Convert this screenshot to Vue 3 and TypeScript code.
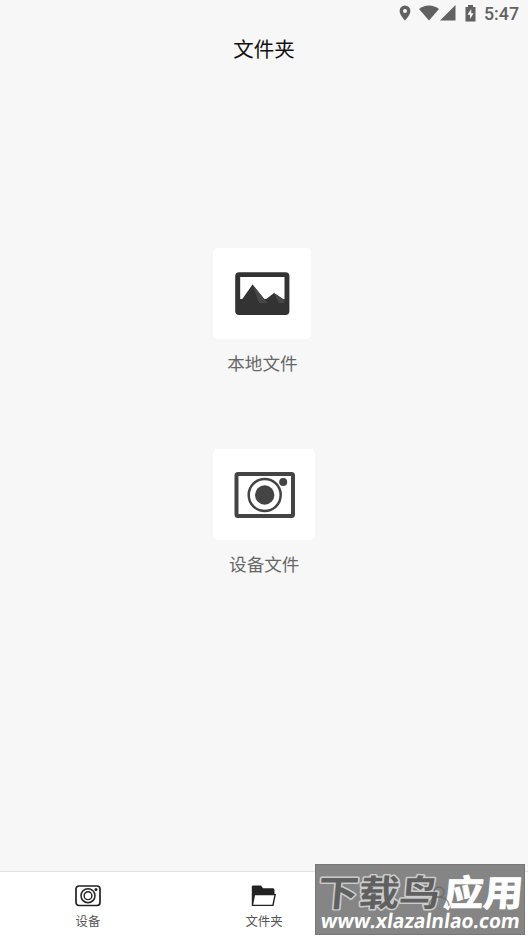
<script setup lang="ts">
interface Tab { key: string; label: string }
const tabs: Tab[] = [
  { key: 'device', label: '设备' },
  { key: 'folder', label: '文件夹' },
  { key: 'mine', label: '' },
]
</script>

<template>
  <div class="screen">
    <div class="status">
      <svg class="pin" viewBox="0 0 12 16"><path fill-rule="evenodd" d="M6 .5A5.4 5.4 0 0 0 .6 5.9C.6 9.9 6 15.5 6 15.5s5.4-5.6 5.4-9.6A5.4 5.4 0 0 0 6 .5zM6 4a2 2 0 1 1 0 4 2 2 0 0 1 0-4z" /></svg>
      <svg class="wifi" viewBox="0 0 20 16"><path d="M0 4C5.500-.7 14.500-.7 20 4L10 15.500z" /></svg>
      <svg class="signal" viewBox="0 0 16 16"><path d="M15.500 0V15.500H0z" /></svg>
      <svg class="battery" viewBox="0 0 11 17"><path fill-rule="evenodd" d="M3 0H8V2H10.500V16.500H.5V2H3zM6.200 4L2.500 9.800H5V14L8.600 8.300H6.200z" /></svg>
      <span class="clock">5:47</span>
    </div>
    <header class="title">文件夹</header>

    <main class="files">
      <section class="entry local">
        <div class="tile">
          <svg width="56" height="44" viewBox="0 0 56 44">
            <rect x="1.200" y=".3" width="54.200" height="42.700" rx="4" fill="#333" />
            <path d="M6.200 5H50.500V27H6.200z" fill="#fff" />
            <path d="M6.200 30L18.500 12.500 31 28 40 21 50.500 28V32H6.200z" fill="#333" />
            <path d="M18.500 12.500L31 28 33.500 31H25zM40 21L50.500 28V31H45z" fill="#484848" />
          </svg>
        </div>
        <div class="name">本地文件</div>
      </section>
      <section class="entry device">
        <div class="tile">
          <svg width="61" height="46" viewBox="0 0 61 46">
            <rect x="2.500" y="2" width="56.500" height="42" rx="1.500" fill="none" stroke="#444" stroke-width="4" />
            <circle cx="30.700" cy="23" r="16" fill="none" stroke="#444" stroke-width="2.500" />
            <circle cx="30.700" cy="23" r="9.700" fill="#444" />
            <circle cx="49.200" cy="10" r="4" fill="#444" />
          </svg>
        </div>
        <div class="name">设备文件</div>
      </section>
    </main>

    <nav class="tabs">
      <div v-for="tab in tabs" :key="tab.key" class="tab">
        <svg v-if="tab.key === 'device'" width="26" height="22" viewBox="0 0 26 22" fill="none" stroke="#222">
          <rect x="1" y="1" width="24" height="19.500" rx="3" stroke-width="1.700" />
          <circle cx="13" cy="10.700" r="7" stroke-width="1.500" />
          <circle cx="13" cy="10.700" r="3.900" stroke-width="1.400" />
          <circle cx="21" cy="4.600" r="1.500" fill="#222" stroke="none" />
        </svg>
        <svg v-else-if="tab.key === 'folder'" width="26" height="22" viewBox="0 0 26 22">
          <path d="M.8 1.500Q.8.500 2 .500H10L12 3.200H22Q23.500 3.200 23.500 5V9H25L22.500 21H.8z" fill="#222" />
          <path d="M4 10.300H23.300L21.300 19.800H2.200z" fill="#fff" />
        </svg>
        <span>{{ tab.label }}</span>
      </div>
    </nav>

    <div class="watermark">
      <svg width="210" height="71" viewBox="0 0 210 71">
        <g class="brand" transform="translate(2 41.500) skewX(-5)">
          <text class="dark" x="0" y="0" textLength="122" lengthAdjust="spacingAndGlyphs">下载鸟</text>
          <text class="light" x="126" y="0" textLength="79" lengthAdjust="spacingAndGlyphs">应用</text>
        </g>
        <g class="person"><circle cx="124" cy="28" r="5" /><path d="M114 42C114 30 134 30 134 42" /></g>
        <g transform="translate(5 64) skewX(-8)">
          <text class="url" x="0" y="0" textLength="199" lengthAdjust="spacingAndGlyphs">www.xlazalnlao.com</text>
        </g>
      </svg>
    </div>
  </div>
</template>

<style>
body { background: #f7f7f7; }
</style>

<style scoped>
.screen { position: relative; display: flex; flex-direction: column; width: 528px; height: 938px; overflow: hidden; background: #f7f7f7; font-family: Roboto, "Noto Sans CJK SC", sans-serif; }
.status { display: flex; align-items: center; justify-content: flex-end; height: 26px; padding-right: 9px; box-sizing: border-box; color: #616161; }
.status svg { fill: #616161; flex: none; }
.pin { width: 12px; height: 16px; margin-right: 8px; }
.wifi { width: 20px; height: 16px; margin-right: 1px; }
.signal { width: 16px; height: 16px; margin-right: 9px; }
.battery { width: 11px; height: 17px; margin-right: 8px; }
.clock { font-size: 17.800px; line-height: 27px; font-weight: 500; }
.title { height: 45px; line-height: 49px; text-align: center; font-size: 20.500px; color: #111; }
.files { flex: 1; display: flex; flex-direction: column; align-items: flex-start; gap: 72.500px; padding: 177.300px 0 0 213.400px; }
.entry { height: 128.500px; }
.tile { display: flex; align-items: center; justify-content: center; height: 90.800px; border-radius: 5px; background: #fff; }
.local .tile { width: 98px; }
.device .tile { width: 101.700px; }
.name { margin-top: 12px; line-height: 27px; font-size: 17.600px; text-align: center; color: #666; }
.tabs { display: grid; grid-template-columns: repeat(3, 1fr); height: 67px; box-sizing: border-box; border-top: 1px solid #e3e3e3; background: #fff; }
.tab { display: flex; flex-direction: column; align-items: center; padding-top: 13px; font-size: 12.400px; line-height: 18px; color: #555; }
.tab span { margin-top: 6px; }
.watermark { position: absolute; left: 315px; top: 864px; width: 210px; height: 71px; box-sizing: border-box; background: #858585; box-shadow: inset 0 0 0 1px #777; }
.watermark svg { display: block; overflow: visible; }
.person { fill: none; stroke: #5c5c5c; stroke-width: 1.300px; opacity: .6; }
.brand { font-family: "Noto Sans CJK SC", sans-serif; font-weight: 700; font-size: 36px; }
.dark { fill: #606060; stroke: #ccc; stroke-width: 3px; stroke-linejoin: round; paint-order: stroke; }
.light { fill: #fff; stroke: #fff; stroke-width: 1px; }
.url { font-family: "Open Sans", "Noto Sans", sans-serif; font-weight: 700; font-size: 20px; fill: #fff; }
</style>
